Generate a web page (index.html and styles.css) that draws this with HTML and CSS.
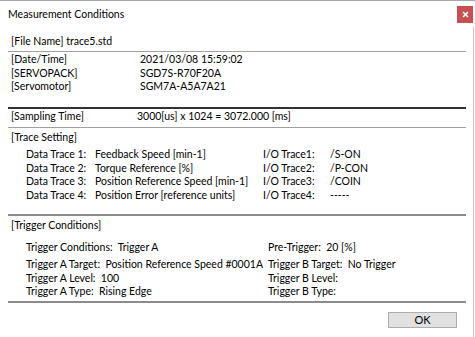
FILE: index.html
```html
<!DOCTYPE html>
<html lang="en">
<head>
  <meta charset="UTF-8" />
  <meta name="viewport" content="width=device-width, initial-scale=1.0" />
  <title>Measurement Conditions</title>
  <link rel="stylesheet" href="styles.css">
</head>
<body>
  <div class="titlebar">
    <span class="title">Measurement Conditions</span>
    <span class="close">
      <svg width="7" height="7" viewBox="0 0 7 7">
        <path d="M1 1 L6 6 M6 1 L1 6" stroke="#fff" stroke-width="1.6" />
      </svg>
    </span>
  </div>

  <div class="content">
    <div class="file">[File Name] trace5.std</div>

    <div class="info">
      <span>[Date/Time]</span><span>2021/03/08 15:59:02</span>
      <span>[SERVOPACK]</span><span>SGD7S-R70F20A</span>
      <span>[Servomotor]</span><span>SGM7A-A5A7A21</span>
    </div>

    <div class="sampling">
      <span>[Sampling Time]</span><span>3000[us] x 1024 = 3072.000 [ms]</span>
    </div>

    <div class="trace">
      <div class="head">[Trace Setting]</div>
      <div class="trace-grid">
        <span>Data Trace 1:</span><span>Feedback Speed [min-1]</span><span>I/O Trace1:</span><span>/S-ON</span>
        <span>Data Trace 2:</span><span>Torque Reference [%]</span><span>I/O Trace2:</span><span>/P-CON</span>
        <span>Data Trace 3:</span><span>Position Reference Speed [min-1]</span><span>I/O Trace3:</span><span>/COIN</span>
        <span>Data Trace 4:</span><span>Position Error [reference units]</span><span>I/O Trace4:</span><span>-----</span>
      </div>
    </div>

    <div class="trigger">
      <div class="head">[Trigger Conditions]</div>
      <div class="trig-top">
        <span>Trigger Conditions:&nbsp; Trigger A</span>
        <span>Pre-Trigger:&nbsp; 20 [%]</span>
      </div>
      <div class="trig-grid">
        <span>Trigger A Target:&nbsp; Position Reference Speed</span><span class="code">#0001A</span><span>Trigger B Target:&nbsp; No Trigger</span>
        <span>Trigger A Level:&nbsp; 100</span><span></span><span>Trigger B Level:</span>
        <span>Trigger A Type:&nbsp; Rising Edge</span><span></span><span>Trigger B Type:</span>
      </div>
    </div>

    <div class="actions">
      <button class="ok">OK</button>
    </div>
  </div>
</body>
</html>
```

FILE: styles.css
```css
body {
  margin: 0;
  width: 475px;
  height: 337px;
  box-sizing: border-box;
  overflow: hidden;
  background: #fff;
  color: #000;
  border-top: 1px solid #a8a8a8;
  font-family: Lato, "Noto Sans", sans-serif;
  font-size: 10.5px;
  white-space: nowrap;
}

.titlebar {
  height: 26px;
  display: flex;
  justify-content: space-between;
  align-items: flex-start;
  padding-left: 8px;
}

.title {
  line-height: 26px;
}

.close {
  width: 16px;
  height: 17px;
  margin-top: 5px;
  margin-right: 2px;
  background: #c75050;
  display: flex;
  align-items: center;
  justify-content: center;
}

.content {
  width: 474px;
  height: 310px;
  box-sizing: border-box;
  border-right: 1px solid #c8c8c8;
  padding: 7px 7px 0 8px;
}

.file {
  line-height: 14px;
  padding-left: 3px;
  margin-bottom: 3px;
}

.info {
  display: grid;
  grid-template-columns: 129px auto;
  line-height: 13.5px;
  padding: 1px 3px 13.5px;
  border-top: 1px solid #a0a0a0;
  border-bottom: 2px solid #333;
}

.sampling {
  display: grid;
  grid-template-columns: 126px auto;
  line-height: 13.5px;
  padding: 1px 3px 3.5px;
  border-bottom: 1px solid #a0a0a0;
}

.head {
  line-height: 13.5px;
  padding-left: 3px;
}

.trace {
  padding: 3.25px 0 11.75px;
  border-bottom: 2px solid #8c8c8c;
}

.trace-grid {
  display: grid;
  grid-template-columns: 69px 168px 67px auto;
  line-height: 13.5px;
  margin-top: 3.5px;
  padding-left: 18px;
}

.trigger {
  padding: 3.25px 0 2.25px;
  border-bottom: 2px solid #8c8c8c;
}

.trig-top {
  display: grid;
  grid-template-columns: 242px auto;
  line-height: 13.5px;
  margin-top: 8.5px;
  padding-left: 18px;
}

.trig-grid {
  display: grid;
  grid-template-columns: 207px 35px auto;
  line-height: 13.5px;
  margin-top: 3.5px;
  padding-left: 18px;
}

.code {
  justify-self: end;
  padding-right: 5px;
}

.actions {
  display: flex;
  justify-content: flex-end;
  padding-top: 9px;
}

.ok {
  width: 69px;
  height: 16px;
  margin: 0 9px 0 0;
  padding: 0;
  background: #e1e1e1;
  border: 1px solid #adadad;
  font-family: inherit;
  font-size: 11px;
  line-height: 14px;
  color: #000;
}
```
